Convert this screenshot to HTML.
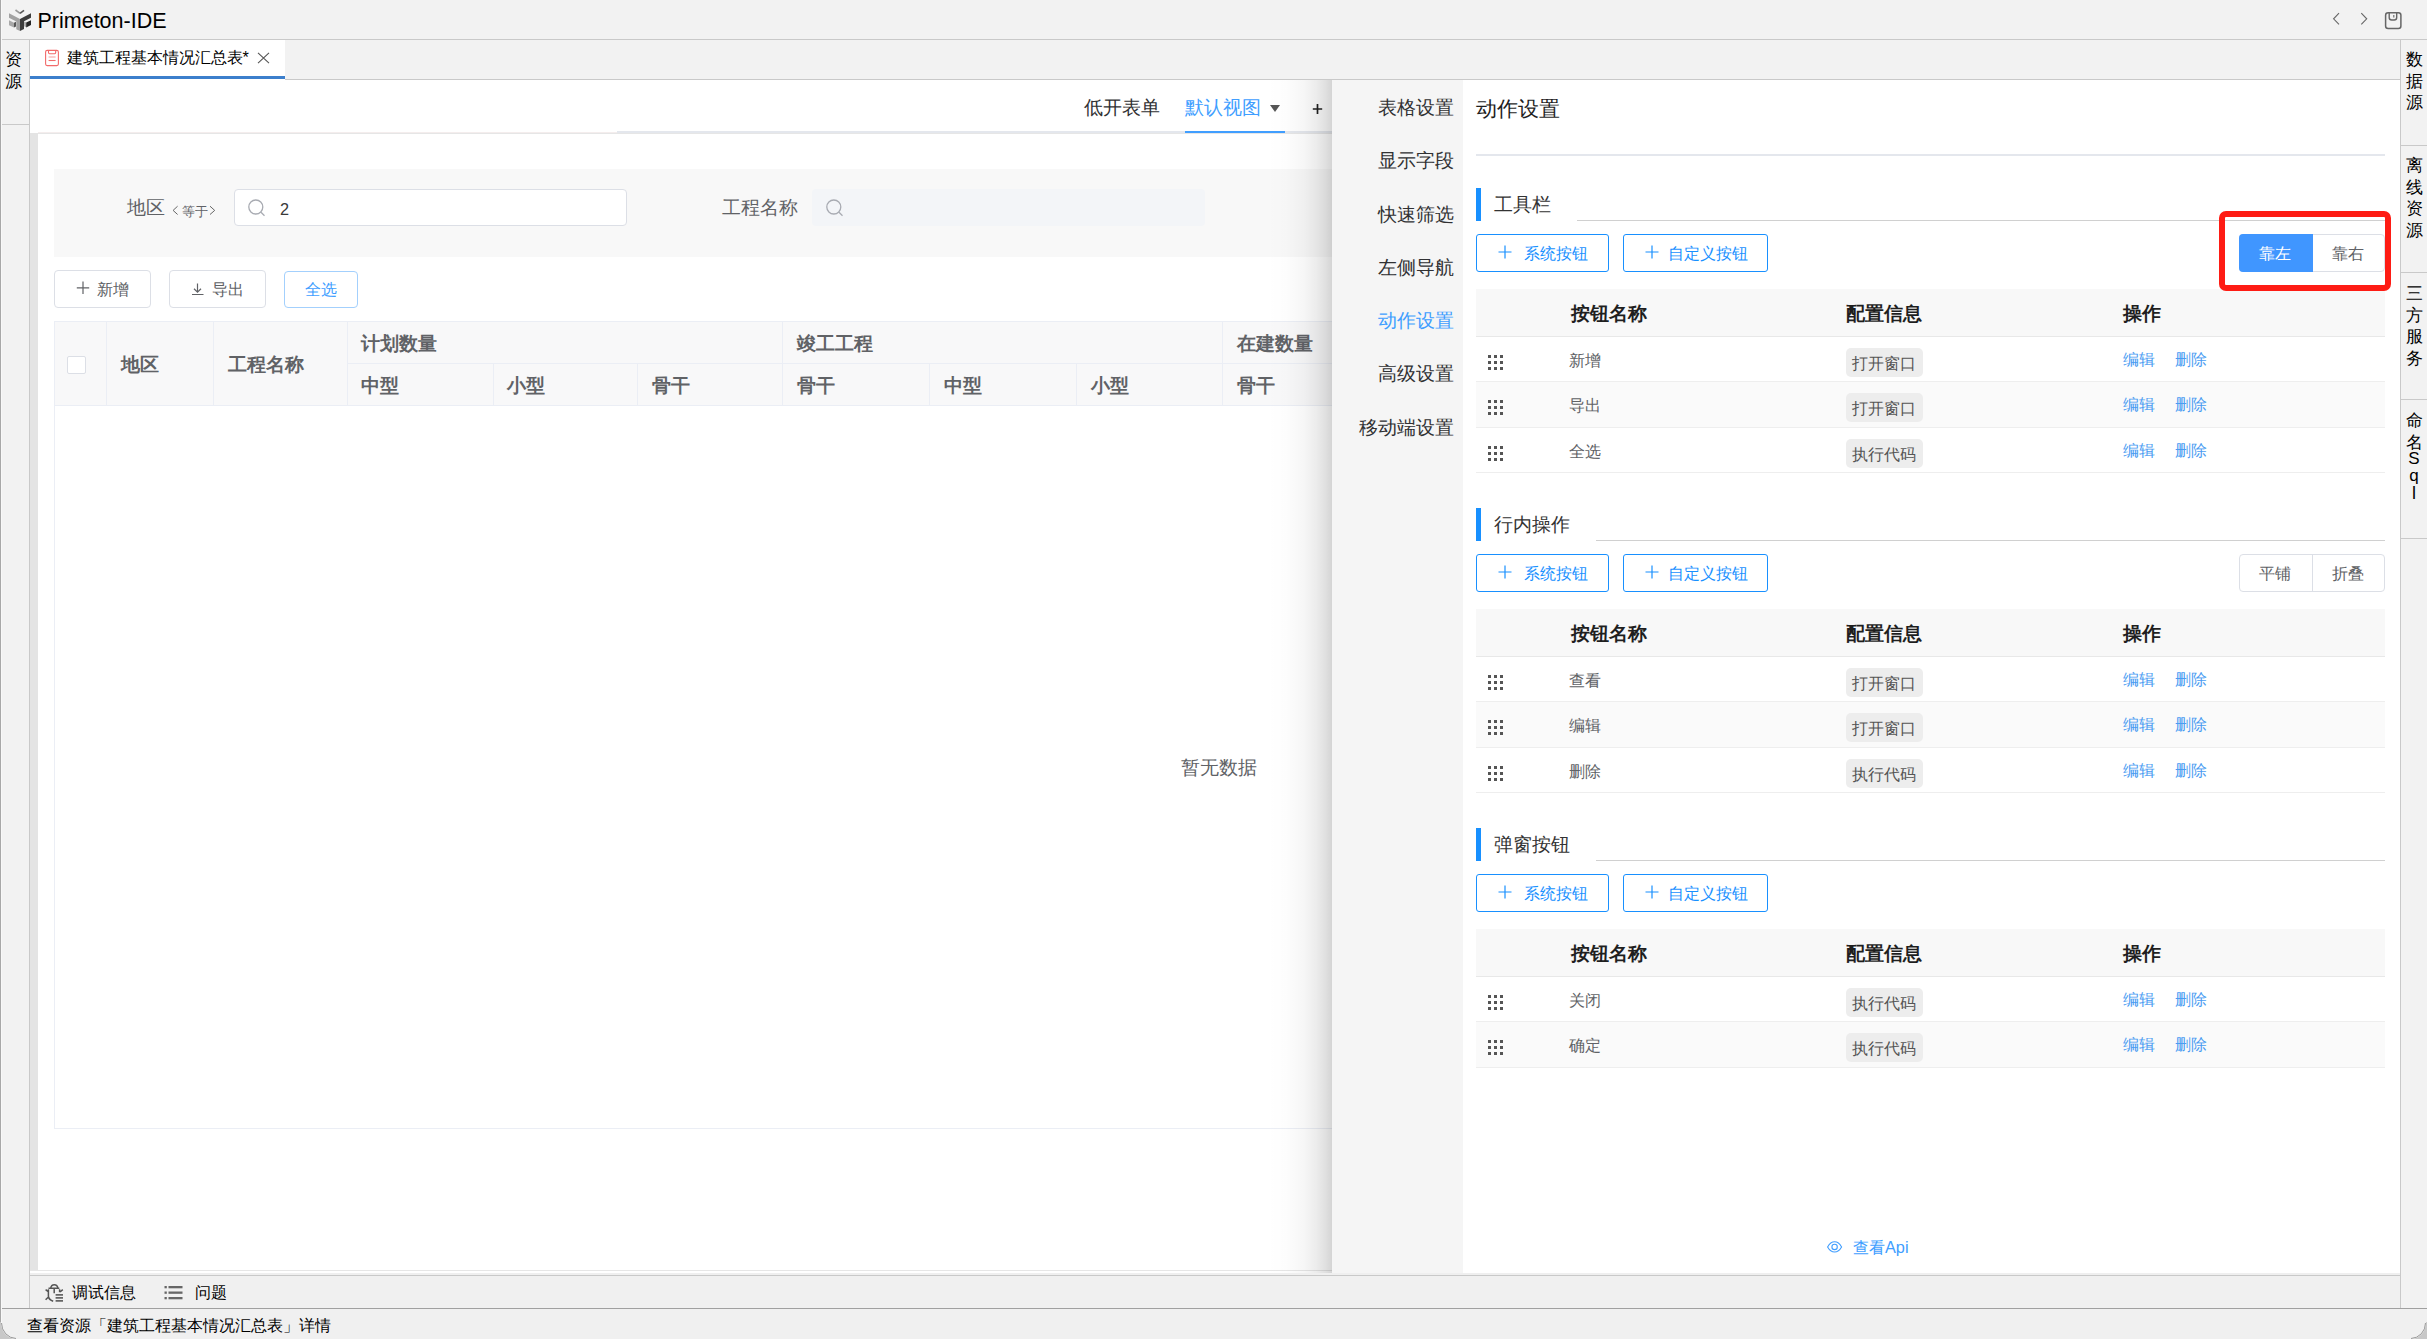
<!DOCTYPE html>
<html><head><meta charset="utf-8">
<style>
*{box-sizing:border-box;margin:0;padding:0}
html,body{width:2427px;height:1339px;overflow:hidden;background:#f0f0f0;font-family:"Liberation Sans",sans-serif;color:#333}
.a{position:absolute}
.t{position:absolute;white-space:nowrap;line-height:1}
</style></head><body>
<!-- window left border -->
<div class="a" style="left:0;top:0;width:1px;height:1339px;background:#a8a8a8"></div>
<div class="a" style="left:1px;top:0;width:1px;height:1339px;background:#f8f8f8;z-index:1"></div>
<!-- title bar -->
<div class="a" style="left:1px;top:0;width:2426px;height:39px;background:#f2f2f2"></div>
<div class="a" style="left:1px;top:39px;width:2426px;height:1px;background:#c9c9c9"></div>
<div class="t" style="left:37.5px;top:11px;font-size:21.5px;color:#000">Primeton-IDE</div>

<!-- left strip -->
<div class="a" style="left:1px;top:40px;width:28px;height:1268px;background:#f2f2f2"></div>
<div class="a" style="left:29px;top:40px;width:1px;height:1268px;background:#c9c9c9"></div>
<div class="a" style="left:1px;top:124px;width:28px;height:1px;background:#c9c9c9"></div>
<div class="t" style="left:5px;top:49px;font-size:17px;line-height:21.5px;color:#000;width:18px;white-space:normal">资源</div>

<!-- tab bar -->
<div class="a" style="left:30px;top:40px;width:2370px;height:39px;background:#f2f2f2"></div>
<div class="a" style="left:30px;top:79px;width:2370px;height:1px;background:#c9c9c9"></div>
<div class="a" style="left:30px;top:40px;width:255px;height:40px;background:#fff"></div>
<div class="a" style="left:30px;top:76px;width:255px;height:3px;background:#3c7fcc"></div>
<div class="t" style="left:66.5px;top:48.6px;font-size:16.3px;color:#000">建筑工程基本情况汇总表*</div>

<!-- content area -->
<div class="a" style="left:30px;top:80px;width:2370px;height:1194px;background:#fff"></div>


<!-- view tabs -->
<div class="t" style="left:1084px;top:98px;font-size:19px;color:#303133">低开表单</div>
<div class="t" style="left:1185px;top:98px;font-size:19px;color:#409eff">默认视图</div>
<div class="a" style="left:1270px;top:105px;width:0;height:0;border-left:5.5px solid transparent;border-right:5.5px solid transparent;border-top:7px solid #555"></div>
<svg class="a" style="left:1312px;top:103px" width="12" height="12" viewBox="0 0 12 12"><path d="M5.5 1 V11 M0.8 6 H10.2" stroke="#222" stroke-width="1.7"/></svg>
<div class="a" style="left:38px;top:132px;width:579px;height:1px;background:#f4eded"></div>
<div class="a" style="left:617px;top:131px;width:1783px;height:2px;background:#e4e7ed"></div>
<div class="a" style="left:1185px;top:131px;width:100px;height:2px;background:#409eff"></div>
<div class="a" style="left:30px;top:133px;width:2370px;height:1px;background:#e6e6e6"></div>
<div class="a" style="left:30px;top:133px;width:8px;height:1138px;background:#e4e4e4"></div>

<!-- query area -->
<div class="a" style="left:54px;top:169px;width:2322px;height:88px;background:#f8f8f8"></div>
<div class="t" style="left:127px;top:198px;font-size:19px;color:#606266">地区</div>
<svg class="a" style="left:170px;top:204px" width="48" height="13" viewBox="0 0 48 13"><path d="M7.6 2.2 L3.1 6.4 L7.6 10.5 M40 2.2 L44.7 6.4 L40 10.5" fill="none" stroke="#666" stroke-width="1"/></svg>
<div class="t" style="left:181.5px;top:205.5px;font-size:12.5px;color:#606266">等于</div>
<div class="a" style="left:234px;top:189px;width:393px;height:37px;background:#fff;border:1px solid #dcdfe6;border-radius:4px"></div>
<svg class="a" style="left:246px;top:197px" width="22" height="22" viewBox="0 0 22 22"><circle cx="9.8" cy="10" r="7" fill="none" stroke="#a8abb2" stroke-width="1.3"/><path d="M15 15.2 L18.5 18.7" stroke="#a8abb2" stroke-width="1.3"/></svg>
<div class="t" style="left:280px;top:201px;font-size:16.3px;color:#3a3a3a">2</div>
<div class="t" style="left:722px;top:198px;font-size:19px;color:#606266">工程名称</div>
<div class="a" style="left:812px;top:189px;width:393px;height:37px;background:#f3f5f8;border-radius:4px"></div>
<svg class="a" style="left:824px;top:197px" width="22" height="22" viewBox="0 0 22 22"><circle cx="9.8" cy="10" r="7" fill="none" stroke="#a8abb2" stroke-width="1.3"/><path d="M15 15.2 L18.5 18.7" stroke="#a8abb2" stroke-width="1.3"/></svg>

<!-- toolbar buttons -->
<div class="a" style="left:54px;top:270px;width:97px;height:38px;border:1px solid #dcdfe6;border-radius:4px;background:#fff"></div>
<svg class="a" style="left:76px;top:281px" width="14" height="14" viewBox="0 0 14 14"><path d="M7 0.5 V13 M0.8 6.8 H13.2" stroke="#606266" stroke-width="1.2"/></svg>
<div class="t" style="left:97px;top:281px;font-size:16.3px;color:#606266">新增</div>
<div class="a" style="left:169px;top:270px;width:97px;height:38px;border:1px solid #dcdfe6;border-radius:4px;background:#fff"></div>
<svg class="a" style="left:190px;top:282px" width="16" height="14" viewBox="0 0 16 14"><path d="M7.5 1.5 V10 M4 6.8 L7.5 10.2 L11 6.8 M2 12.5 H13.5" fill="none" stroke="#606266" stroke-width="1.2"/></svg>
<div class="t" style="left:212px;top:281px;font-size:16.3px;color:#606266">导出</div>
<div class="a" style="left:284px;top:271px;width:74px;height:37px;border:1px solid #a3d0fd;border-radius:4px;background:#fff"></div>
<div class="t" style="left:305px;top:281px;font-size:16.3px;color:#409eff">全选</div>

<!-- left table -->
<div class="a" style="left:54px;top:321px;width:2322px;height:808px;border:1px solid #ebeef5;border-right:none;background:#fff"></div>
<div class="a" style="left:55px;top:322px;width:2321px;height:83px;background:#f8f8f9"></div>
<div class="a" style="left:55px;top:405px;width:2321px;height:1px;background:#ebeef5"></div>
<div class="a" style="left:347px;top:363px;width:2029px;height:1px;background:#ebeef5"></div>
<div class="a" style="left:106px;top:322px;width:1px;height:83px;background:#ebeef5"></div>
<div class="a" style="left:213px;top:322px;width:1px;height:83px;background:#ebeef5"></div>
<div class="a" style="left:347px;top:322px;width:1px;height:83px;background:#ebeef5"></div>
<div class="a" style="left:493px;top:364px;width:1px;height:41px;background:#ebeef5"></div>
<div class="a" style="left:637px;top:364px;width:1px;height:41px;background:#ebeef5"></div>
<div class="a" style="left:782px;top:322px;width:1px;height:83px;background:#ebeef5"></div>
<div class="a" style="left:929px;top:364px;width:1px;height:41px;background:#ebeef5"></div>
<div class="a" style="left:1076px;top:364px;width:1px;height:41px;background:#ebeef5"></div>
<div class="a" style="left:1222px;top:322px;width:1px;height:83px;background:#ebeef5"></div>
<div class="a" style="left:67px;top:356px;width:19px;height:18px;border:1px solid #dcdfe6;border-radius:2px;background:#fff"></div>
<div class="t" style="left:121px;top:356px;font-size:18.5px;font-weight:bold;color:#606266">地区</div>
<div class="t" style="left:228px;top:356px;font-size:18.5px;font-weight:bold;color:#606266">工程名称</div>
<div class="t" style="left:361px;top:335px;font-size:18.5px;font-weight:bold;color:#606266">计划数量</div>
<div class="t" style="left:797px;top:335px;font-size:18.5px;font-weight:bold;color:#606266">竣工工程</div>
<div class="t" style="left:1237px;top:335px;font-size:18.5px;font-weight:bold;color:#606266">在建数量</div>
<div class="t" style="left:361px;top:377px;font-size:18.5px;font-weight:bold;color:#606266">中型</div>
<div class="t" style="left:507px;top:377px;font-size:18.5px;font-weight:bold;color:#606266">小型</div>
<div class="t" style="left:652px;top:377px;font-size:18.5px;font-weight:bold;color:#606266">骨干</div>
<div class="t" style="left:797px;top:377px;font-size:18.5px;font-weight:bold;color:#606266">骨干</div>
<div class="t" style="left:944px;top:377px;font-size:18.5px;font-weight:bold;color:#606266">中型</div>
<div class="t" style="left:1091px;top:377px;font-size:18.5px;font-weight:bold;color:#606266">小型</div>
<div class="t" style="left:1237px;top:377px;font-size:18.5px;font-weight:bold;color:#606266">骨干</div>
<div class="t" style="left:1181px;top:758px;font-size:19px;color:#606266">暂无数据</div>
<div class="a" style="left:30px;top:1270px;width:2370px;height:1px;background:#e6e6e6"></div><div class="a" style="left:30px;top:1273px;width:2370px;height:2px;background:#efefef"></div>


<!-- drawer -->
<div class="a" style="left:1332px;top:80px;width:1068px;height:1193px;background:#fff"></div>
<div class="a" style="left:1266px;top:80px;width:66px;height:1193px;background:linear-gradient(to right,rgba(0,0,0,0) 0%,rgba(0,0,0,0.008) 30%,rgba(0,0,0,0.035) 58%,rgba(0,0,0,0.075) 76%,rgba(0,0,0,0.12) 90%,rgba(0,0,0,0.17) 100%)"></div>
<div class="a" style="left:1332px;top:80px;width:131px;height:1193px;background:#f5f5f5"></div>
<div class="t" style="left:1378px;top:98px;font-size:19px;color:#303133">表格设置</div>
<div class="t" style="left:1378px;top:151px;font-size:19px;color:#303133">显示字段</div>
<div class="t" style="left:1378px;top:205px;font-size:19px;color:#303133">快速筛选</div>
<div class="t" style="left:1378px;top:258px;font-size:19px;color:#303133">左侧导航</div>
<div class="t" style="left:1378px;top:311px;font-size:19px;color:#409eff">动作设置</div>
<div class="t" style="left:1378px;top:364px;font-size:19px;color:#303133">高级设置</div>
<div class="t" style="left:1359px;top:418px;font-size:19px;color:#303133">移动端设置</div>
<div class="t" style="left:1476px;top:98px;font-size:21px;color:#1f1f1f">动作设置</div>
<div class="a" style="left:1476px;top:154px;width:909px;height:2px;background:#e4e7ed"></div>
<div class="a" style="left:1476px;top:188px;width:5px;height:33px;background:#1890ff"></div>
<div class="t" style="left:1494px;top:195px;font-size:19px;color:#333">工具栏</div>
<div class="a" style="left:1577px;top:220px;width:808px;height:1px;background:#d0d0d0"></div>
<div class="a" style="left:1476px;top:234px;width:133px;height:38px;border:1px solid #1890ff;border-radius:3px"></div>
<svg class="a" style="left:1498px;top:245px" width="14" height="14" viewBox="0 0 14 14"><path d="M7 0.5 V13.5 M0.5 7 H13.5" stroke="#1890ff" stroke-width="1.2"/></svg>
<div class="t" style="left:1524px;top:245px;font-size:16.3px;color:#1890ff">系统按钮</div>
<div class="a" style="left:1623px;top:234px;width:145px;height:38px;border:1px solid #1890ff;border-radius:3px"></div>
<svg class="a" style="left:1645px;top:245px" width="14" height="14" viewBox="0 0 14 14"><path d="M7 0.5 V13.5 M0.5 7 H13.5" stroke="#1890ff" stroke-width="1.2"/></svg>
<div class="t" style="left:1668px;top:245px;font-size:16.3px;color:#1890ff">自定义按钮</div>
<div class="a" style="left:2239px;top:234px;width:146px;height:38px;border:1px solid #dcdfe6;border-radius:4px;background:#fff"></div>
<div class="a" style="left:2239px;top:234px;width:74px;height:38px;background:#4096ff;border-radius:4px 0 0 4px"></div>
<div class="t" style="left:2259px;top:244.5px;font-size:16.3px;color:#fff">靠左</div>
<div class="t" style="left:2332px;top:244.5px;font-size:16.3px;color:#606266">靠右</div>
<div class="a" style="left:1476px;top:289px;width:909px;height:48px;background:#f8f8f8;border-bottom:1px solid #e8e8e8"></div>
<div class="t" style="left:1570.5px;top:305px;font-size:18.5px;font-weight:bold;color:#1f1f1f">按钮名称</div>
<div class="t" style="left:1846px;top:305px;font-size:18.5px;font-weight:bold;color:#1f1f1f">配置信息</div>
<div class="t" style="left:2122.5px;top:305px;font-size:18.5px;font-weight:bold;color:#1f1f1f">操作</div>
<div class="a" style="left:1476px;top:337px;width:909px;height:45px;background:#fff;border-bottom:1px solid #eee"></div>
<div class="a" style="left:1488px;top:355px;width:3px;height:3px;background:#555"></div><div class="a" style="left:1488px;top:361px;width:3px;height:3px;background:#555"></div><div class="a" style="left:1488px;top:367px;width:3px;height:3px;background:#555"></div><div class="a" style="left:1494px;top:355px;width:3px;height:3px;background:#555"></div><div class="a" style="left:1494px;top:361px;width:3px;height:3px;background:#555"></div><div class="a" style="left:1494px;top:367px;width:3px;height:3px;background:#555"></div><div class="a" style="left:1500px;top:355px;width:3px;height:3px;background:#555"></div><div class="a" style="left:1500px;top:361px;width:3px;height:3px;background:#555"></div><div class="a" style="left:1500px;top:367px;width:3px;height:3px;background:#555"></div>
<div class="t" style="left:1569px;top:352px;font-size:16.3px;color:#606266">新增</div>
<div class="a" style="left:1846px;top:348px;width:77px;height:29px;background:#ededed;border-radius:5px"></div>
<div class="t" style="left:1852px;top:355px;font-size:16.3px;color:#555">打开窗口</div>
<div class="t" style="left:2123px;top:351px;font-size:16.3px;color:#4a9cf2">编辑</div>
<div class="t" style="left:2175px;top:351px;font-size:16.3px;color:#4a9cf2">删除</div>
<div class="a" style="left:1476px;top:382px;width:909px;height:46px;background:#fafafa;border-bottom:1px solid #eee"></div>
<div class="a" style="left:1488px;top:400px;width:3px;height:3px;background:#555"></div><div class="a" style="left:1488px;top:406px;width:3px;height:3px;background:#555"></div><div class="a" style="left:1488px;top:412px;width:3px;height:3px;background:#555"></div><div class="a" style="left:1494px;top:400px;width:3px;height:3px;background:#555"></div><div class="a" style="left:1494px;top:406px;width:3px;height:3px;background:#555"></div><div class="a" style="left:1494px;top:412px;width:3px;height:3px;background:#555"></div><div class="a" style="left:1500px;top:400px;width:3px;height:3px;background:#555"></div><div class="a" style="left:1500px;top:406px;width:3px;height:3px;background:#555"></div><div class="a" style="left:1500px;top:412px;width:3px;height:3px;background:#555"></div>
<div class="t" style="left:1569px;top:397px;font-size:16.3px;color:#606266">导出</div>
<div class="a" style="left:1846px;top:393px;width:77px;height:29px;background:#ededed;border-radius:5px"></div>
<div class="t" style="left:1852px;top:400px;font-size:16.3px;color:#555">打开窗口</div>
<div class="t" style="left:2123px;top:396px;font-size:16.3px;color:#4a9cf2">编辑</div>
<div class="t" style="left:2175px;top:396px;font-size:16.3px;color:#4a9cf2">删除</div>
<div class="a" style="left:1476px;top:428px;width:909px;height:45px;background:#fff;border-bottom:1px solid #eee"></div>
<div class="a" style="left:1488px;top:446px;width:3px;height:3px;background:#555"></div><div class="a" style="left:1488px;top:452px;width:3px;height:3px;background:#555"></div><div class="a" style="left:1488px;top:458px;width:3px;height:3px;background:#555"></div><div class="a" style="left:1494px;top:446px;width:3px;height:3px;background:#555"></div><div class="a" style="left:1494px;top:452px;width:3px;height:3px;background:#555"></div><div class="a" style="left:1494px;top:458px;width:3px;height:3px;background:#555"></div><div class="a" style="left:1500px;top:446px;width:3px;height:3px;background:#555"></div><div class="a" style="left:1500px;top:452px;width:3px;height:3px;background:#555"></div><div class="a" style="left:1500px;top:458px;width:3px;height:3px;background:#555"></div>
<div class="t" style="left:1569px;top:443px;font-size:16.3px;color:#606266">全选</div>
<div class="a" style="left:1846px;top:439px;width:77px;height:29px;background:#ededed;border-radius:5px"></div>
<div class="t" style="left:1852px;top:446px;font-size:16.3px;color:#555">执行代码</div>
<div class="t" style="left:2123px;top:442px;font-size:16.3px;color:#4a9cf2">编辑</div>
<div class="t" style="left:2175px;top:442px;font-size:16.3px;color:#4a9cf2">删除</div>
<div class="a" style="left:1476px;top:508px;width:5px;height:33px;background:#1890ff"></div>
<div class="t" style="left:1494px;top:515px;font-size:19px;color:#333">行内操作</div>
<div class="a" style="left:1596px;top:540px;width:789px;height:1px;background:#d0d0d0"></div>
<div class="a" style="left:1476px;top:554px;width:133px;height:38px;border:1px solid #1890ff;border-radius:3px"></div>
<svg class="a" style="left:1498px;top:565px" width="14" height="14" viewBox="0 0 14 14"><path d="M7 0.5 V13.5 M0.5 7 H13.5" stroke="#1890ff" stroke-width="1.2"/></svg>
<div class="t" style="left:1524px;top:565px;font-size:16.3px;color:#1890ff">系统按钮</div>
<div class="a" style="left:1623px;top:554px;width:145px;height:38px;border:1px solid #1890ff;border-radius:3px"></div>
<svg class="a" style="left:1645px;top:565px" width="14" height="14" viewBox="0 0 14 14"><path d="M7 0.5 V13.5 M0.5 7 H13.5" stroke="#1890ff" stroke-width="1.2"/></svg>
<div class="t" style="left:1668px;top:565px;font-size:16.3px;color:#1890ff">自定义按钮</div>
<div class="a" style="left:2239px;top:554px;width:146px;height:38px;border:1px solid #dcdfe6;border-radius:4px;background:#fff"></div>
<div class="a" style="left:2312px;top:554px;width:1px;height:38px;background:#dcdfe6"></div>
<div class="t" style="left:2259px;top:564.5px;font-size:16.3px;color:#606266">平铺</div>
<div class="t" style="left:2332px;top:564.5px;font-size:16.3px;color:#606266">折叠</div>
<div class="a" style="left:1476px;top:609px;width:909px;height:48px;background:#f8f8f8;border-bottom:1px solid #e8e8e8"></div>
<div class="t" style="left:1570.5px;top:625px;font-size:18.5px;font-weight:bold;color:#1f1f1f">按钮名称</div>
<div class="t" style="left:1846px;top:625px;font-size:18.5px;font-weight:bold;color:#1f1f1f">配置信息</div>
<div class="t" style="left:2122.5px;top:625px;font-size:18.5px;font-weight:bold;color:#1f1f1f">操作</div>
<div class="a" style="left:1476px;top:657px;width:909px;height:45px;background:#fff;border-bottom:1px solid #eee"></div>
<div class="a" style="left:1488px;top:675px;width:3px;height:3px;background:#555"></div><div class="a" style="left:1488px;top:681px;width:3px;height:3px;background:#555"></div><div class="a" style="left:1488px;top:687px;width:3px;height:3px;background:#555"></div><div class="a" style="left:1494px;top:675px;width:3px;height:3px;background:#555"></div><div class="a" style="left:1494px;top:681px;width:3px;height:3px;background:#555"></div><div class="a" style="left:1494px;top:687px;width:3px;height:3px;background:#555"></div><div class="a" style="left:1500px;top:675px;width:3px;height:3px;background:#555"></div><div class="a" style="left:1500px;top:681px;width:3px;height:3px;background:#555"></div><div class="a" style="left:1500px;top:687px;width:3px;height:3px;background:#555"></div>
<div class="t" style="left:1569px;top:672px;font-size:16.3px;color:#606266">查看</div>
<div class="a" style="left:1846px;top:668px;width:77px;height:29px;background:#ededed;border-radius:5px"></div>
<div class="t" style="left:1852px;top:675px;font-size:16.3px;color:#555">打开窗口</div>
<div class="t" style="left:2123px;top:671px;font-size:16.3px;color:#4a9cf2">编辑</div>
<div class="t" style="left:2175px;top:671px;font-size:16.3px;color:#4a9cf2">删除</div>
<div class="a" style="left:1476px;top:702px;width:909px;height:46px;background:#fafafa;border-bottom:1px solid #eee"></div>
<div class="a" style="left:1488px;top:720px;width:3px;height:3px;background:#555"></div><div class="a" style="left:1488px;top:726px;width:3px;height:3px;background:#555"></div><div class="a" style="left:1488px;top:732px;width:3px;height:3px;background:#555"></div><div class="a" style="left:1494px;top:720px;width:3px;height:3px;background:#555"></div><div class="a" style="left:1494px;top:726px;width:3px;height:3px;background:#555"></div><div class="a" style="left:1494px;top:732px;width:3px;height:3px;background:#555"></div><div class="a" style="left:1500px;top:720px;width:3px;height:3px;background:#555"></div><div class="a" style="left:1500px;top:726px;width:3px;height:3px;background:#555"></div><div class="a" style="left:1500px;top:732px;width:3px;height:3px;background:#555"></div>
<div class="t" style="left:1569px;top:717px;font-size:16.3px;color:#606266">编辑</div>
<div class="a" style="left:1846px;top:713px;width:77px;height:29px;background:#ededed;border-radius:5px"></div>
<div class="t" style="left:1852px;top:720px;font-size:16.3px;color:#555">打开窗口</div>
<div class="t" style="left:2123px;top:716px;font-size:16.3px;color:#4a9cf2">编辑</div>
<div class="t" style="left:2175px;top:716px;font-size:16.3px;color:#4a9cf2">删除</div>
<div class="a" style="left:1476px;top:748px;width:909px;height:45px;background:#fff;border-bottom:1px solid #eee"></div>
<div class="a" style="left:1488px;top:766px;width:3px;height:3px;background:#555"></div><div class="a" style="left:1488px;top:772px;width:3px;height:3px;background:#555"></div><div class="a" style="left:1488px;top:778px;width:3px;height:3px;background:#555"></div><div class="a" style="left:1494px;top:766px;width:3px;height:3px;background:#555"></div><div class="a" style="left:1494px;top:772px;width:3px;height:3px;background:#555"></div><div class="a" style="left:1494px;top:778px;width:3px;height:3px;background:#555"></div><div class="a" style="left:1500px;top:766px;width:3px;height:3px;background:#555"></div><div class="a" style="left:1500px;top:772px;width:3px;height:3px;background:#555"></div><div class="a" style="left:1500px;top:778px;width:3px;height:3px;background:#555"></div>
<div class="t" style="left:1569px;top:763px;font-size:16.3px;color:#606266">删除</div>
<div class="a" style="left:1846px;top:759px;width:77px;height:29px;background:#ededed;border-radius:5px"></div>
<div class="t" style="left:1852px;top:766px;font-size:16.3px;color:#555">执行代码</div>
<div class="t" style="left:2123px;top:762px;font-size:16.3px;color:#4a9cf2">编辑</div>
<div class="t" style="left:2175px;top:762px;font-size:16.3px;color:#4a9cf2">删除</div>
<div class="a" style="left:1476px;top:828px;width:5px;height:33px;background:#1890ff"></div>
<div class="t" style="left:1494px;top:835px;font-size:19px;color:#333">弹窗按钮</div>
<div class="a" style="left:1596px;top:860px;width:789px;height:1px;background:#d0d0d0"></div>
<div class="a" style="left:1476px;top:874px;width:133px;height:38px;border:1px solid #1890ff;border-radius:3px"></div>
<svg class="a" style="left:1498px;top:885px" width="14" height="14" viewBox="0 0 14 14"><path d="M7 0.5 V13.5 M0.5 7 H13.5" stroke="#1890ff" stroke-width="1.2"/></svg>
<div class="t" style="left:1524px;top:885px;font-size:16.3px;color:#1890ff">系统按钮</div>
<div class="a" style="left:1623px;top:874px;width:145px;height:38px;border:1px solid #1890ff;border-radius:3px"></div>
<svg class="a" style="left:1645px;top:885px" width="14" height="14" viewBox="0 0 14 14"><path d="M7 0.5 V13.5 M0.5 7 H13.5" stroke="#1890ff" stroke-width="1.2"/></svg>
<div class="t" style="left:1668px;top:885px;font-size:16.3px;color:#1890ff">自定义按钮</div>
<div class="a" style="left:1476px;top:929px;width:909px;height:48px;background:#f8f8f8;border-bottom:1px solid #e8e8e8"></div>
<div class="t" style="left:1570.5px;top:945px;font-size:18.5px;font-weight:bold;color:#1f1f1f">按钮名称</div>
<div class="t" style="left:1846px;top:945px;font-size:18.5px;font-weight:bold;color:#1f1f1f">配置信息</div>
<div class="t" style="left:2122.5px;top:945px;font-size:18.5px;font-weight:bold;color:#1f1f1f">操作</div>
<div class="a" style="left:1476px;top:977px;width:909px;height:45px;background:#fff;border-bottom:1px solid #eee"></div>
<div class="a" style="left:1488px;top:995px;width:3px;height:3px;background:#555"></div><div class="a" style="left:1488px;top:1001px;width:3px;height:3px;background:#555"></div><div class="a" style="left:1488px;top:1007px;width:3px;height:3px;background:#555"></div><div class="a" style="left:1494px;top:995px;width:3px;height:3px;background:#555"></div><div class="a" style="left:1494px;top:1001px;width:3px;height:3px;background:#555"></div><div class="a" style="left:1494px;top:1007px;width:3px;height:3px;background:#555"></div><div class="a" style="left:1500px;top:995px;width:3px;height:3px;background:#555"></div><div class="a" style="left:1500px;top:1001px;width:3px;height:3px;background:#555"></div><div class="a" style="left:1500px;top:1007px;width:3px;height:3px;background:#555"></div>
<div class="t" style="left:1569px;top:992px;font-size:16.3px;color:#606266">关闭</div>
<div class="a" style="left:1846px;top:988px;width:77px;height:29px;background:#ededed;border-radius:5px"></div>
<div class="t" style="left:1852px;top:995px;font-size:16.3px;color:#555">执行代码</div>
<div class="t" style="left:2123px;top:991px;font-size:16.3px;color:#4a9cf2">编辑</div>
<div class="t" style="left:2175px;top:991px;font-size:16.3px;color:#4a9cf2">删除</div>
<div class="a" style="left:1476px;top:1022px;width:909px;height:46px;background:#fafafa;border-bottom:1px solid #eee"></div>
<div class="a" style="left:1488px;top:1040px;width:3px;height:3px;background:#555"></div><div class="a" style="left:1488px;top:1046px;width:3px;height:3px;background:#555"></div><div class="a" style="left:1488px;top:1052px;width:3px;height:3px;background:#555"></div><div class="a" style="left:1494px;top:1040px;width:3px;height:3px;background:#555"></div><div class="a" style="left:1494px;top:1046px;width:3px;height:3px;background:#555"></div><div class="a" style="left:1494px;top:1052px;width:3px;height:3px;background:#555"></div><div class="a" style="left:1500px;top:1040px;width:3px;height:3px;background:#555"></div><div class="a" style="left:1500px;top:1046px;width:3px;height:3px;background:#555"></div><div class="a" style="left:1500px;top:1052px;width:3px;height:3px;background:#555"></div>
<div class="t" style="left:1569px;top:1037px;font-size:16.3px;color:#606266">确定</div>
<div class="a" style="left:1846px;top:1033px;width:77px;height:29px;background:#ededed;border-radius:5px"></div>
<div class="t" style="left:1852px;top:1040px;font-size:16.3px;color:#555">执行代码</div>
<div class="t" style="left:2123px;top:1036px;font-size:16.3px;color:#4a9cf2">编辑</div>
<div class="t" style="left:2175px;top:1036px;font-size:16.3px;color:#4a9cf2">删除</div>
<div class="a" style="left:2219px;top:211px;width:172px;height:80px;border:6px solid #fe1c14;border-radius:7px"></div>
<svg class="a" style="left:1826px;top:1240px" width="18" height="14" viewBox="0 0 18 14"><path d="M1.6 6.9 Q4.5 1.8 8.6 1.8 Q12.7 1.8 15.6 6.9 Q12.7 12 8.6 12 Q4.5 12 1.6 6.9 Z" fill="none" stroke="#409eff" stroke-width="1.1"/><circle cx="8.6" cy="6.9" r="2.7" fill="none" stroke="#409eff" stroke-width="1.1"/></svg>
<div class="t" style="left:1853px;top:1239px;font-size:16.3px;color:#409eff">查看Api</div>

<!-- right strip -->
<div class="a" style="left:2400px;top:40px;width:1px;height:1268px;background:#c9c9c9"></div>
<div class="a" style="left:2401px;top:40px;width:26px;height:1268px;background:#f2f2f2"></div>

<!-- bottom panel -->
<div class="a" style="left:30px;top:1275px;width:2370px;height:1px;background:#c9c9c9"></div>
<div class="a" style="left:1px;top:1308px;width:2426px;height:1px;background:#a0a0a0"></div>


<!-- logo -->
<svg class="a" style="left:5px;top:4px" width="32" height="32" viewBox="0 0 32 32">
<path d="M10.5 6 L15 9.3" stroke="#9a9a9a" stroke-width="1.6" fill="none"/>
<path d="M15 9.3 L19 6.3" stroke="#555" stroke-width="1.6" fill="none"/>
<polygon points="4,9.3 15,15 15,27 11.3,25.2 11.3,17.5 4,13.8" fill="#a2a2a2"/>
<polygon points="4,16.3 9,18.8 9,23.6 4,21.2" fill="#a8a8a8"/>
<polygon points="9,18.8 11,17.8 11,22.6 9,23.6" fill="#555"/>
<polygon points="15,15 26,9.3 26,13.8 19,17.3 19,25 15,27" fill="#3c3c3c"/>
<polygon points="19.2,17.6 21.2,18.6 21.2,23.2 19.2,22.2" fill="#a5a5a5"/>
<polygon points="21.2,18.6 26,16.2 26,21 21.2,23.4" fill="#262626"/>
</svg>
<!-- title right icons -->
<svg class="a" style="left:2325px;top:5px" width="85" height="30" viewBox="0 0 85 30">
<path d="M14 8.2 L8.6 13.8 L14 19.4" fill="none" stroke="#666" stroke-width="1.1"/>
<path d="M36.3 8.2 L41.7 13.8 L36.3 19.4" fill="none" stroke="#666" stroke-width="1.1"/>
<rect x="60.6" y="7.7" width="15.3" height="15.8" rx="2.5" fill="none" stroke="#666" stroke-width="1.5"/>
<path d="M64.2 7.5 V12.5 Q64.2 15 66.7 15 H69.2 Q71.7 15 71.7 12.5 V7.5" fill="none" stroke="#666" stroke-width="1.4"/>
<path d="M68.8 10 V12.6" stroke="#666" stroke-width="1.1"/>
</svg>
<!-- tab icon -->
<svg class="a" style="left:42px;top:47px" width="20" height="22" viewBox="0 0 20 22">
<rect x="3.6" y="3.4" width="12.8" height="15.2" rx="1.6" fill="none" stroke="#f26a6a" stroke-width="1.1"/>
<path d="M6.5 3.4 V5.6 Q6.5 6.7 7.6 6.7 H12.6 Q13.7 6.7 13.7 5.6 V3.4" fill="none" stroke="#f26a6a" stroke-width="1.1"/>
<path d="M6.6 10 H13.6" stroke="#f7a5a5" stroke-width="1.1"/>
<path d="M6.6 13.5 H13.6" stroke="#f26a6a" stroke-width="1.1"/>
</svg>
<svg class="a" style="left:256px;top:51px" width="15" height="14" viewBox="0 0 15 14">
<path d="M2 1.8 L13 12.2 M13 1.8 L2 12.2" stroke="#555" stroke-width="1.1"/>
</svg>
<!-- right strip texts -->
<div class="a" style="left:2401px;top:145px;width:26px;height:1px;background:#c9c9c9"></div>
<div class="a" style="left:2401px;top:272px;width:26px;height:1px;background:#c9c9c9"></div>
<div class="a" style="left:2401px;top:399px;width:26px;height:1px;background:#c9c9c9"></div>
<div class="a" style="left:2401px;top:538px;width:26px;height:1px;background:#c9c9c9"></div>
<div class="t" style="left:2405px;top:49px;font-size:17px;line-height:21.7px;color:#000;width:18px;white-space:normal;text-align:center">数据源</div>
<div class="t" style="left:2405px;top:155px;font-size:17px;line-height:21.7px;color:#000;width:18px;white-space:normal;text-align:center">离线资源</div>
<div class="t" style="left:2405px;top:283px;font-size:17px;line-height:21.7px;color:#000;width:18px;white-space:normal;text-align:center">三方服务</div>
<div class="t" style="left:2405px;top:410px;font-size:17px;line-height:21.7px;color:#000;width:18px;white-space:normal;text-align:center">命名</div>
<div class="t" style="left:2405px;top:450.4px;font-size:17px;color:#000;width:18px;text-align:center">S</div>
<div class="t" style="left:2405px;top:466.7px;font-size:17px;color:#000;width:18px;text-align:center">q</div>
<div class="t" style="left:2405px;top:484px;font-size:18px;color:#000;width:18px;text-align:center">l</div>
<!-- bottom panel -->
<svg class="a" style="left:40px;top:1280px" width="30" height="26" viewBox="0 0 30 26">
<path d="M8.5 8.3 H19.3 M10.6 8.3 Q11.2 4.7 14.3 4.7 Q17.4 4.7 18 8.3 M8.4 9.3 V16.5 Q9 19.8 13.2 21.2 M14.2 8.5 V13.3 M19.6 9.3 V12.3 M5.6 9.6 L8.2 11.6 M5.6 19.8 L8.2 17.2 M20 12 L22.8 9.6" fill="none" stroke="#555" stroke-width="1.5"/>
<path d="M15.6 14.8 H23 M15.6 17.8 H23 M15.6 20.8 H23" stroke="#666" stroke-width="1.8"/>
</svg>
<div class="t" style="left:72px;top:1283.5px;font-size:16.05px;color:#000">调试信息</div>
<svg class="a" style="left:164px;top:1285px" width="20" height="16" viewBox="0 0 20 16">
<rect x="0.5" y="1" width="2.3" height="2.3" fill="#666"/><rect x="0.5" y="6.5" width="2.3" height="2.3" fill="#666"/><rect x="0.5" y="12" width="2.3" height="2.3" fill="#666"/>
<rect x="4.5" y="1" width="14" height="2.3" fill="#666"/><rect x="4.5" y="6.5" width="14" height="2.3" fill="#666"/><rect x="4.5" y="12" width="14" height="2.3" fill="#666"/>
</svg>
<div class="t" style="left:195px;top:1283.5px;font-size:16.05px;color:#000">问题</div>
<!-- corners -->
<svg class="a" style="left:0;top:1322px;z-index:2" width="16" height="17" viewBox="0 0 16 17"><path d="M0 0 L0 17 L16 17 A15 16 0 0 1 1 1 L1 0 Z" fill="#c8c8c8"/><path d="M16 16.5 A15 15.5 0 0 1 1.5 1" fill="none" stroke="#9a9a9a" stroke-width="1"/></svg>
<svg class="a" style="left:2411px;top:1322px;z-index:2" width="16" height="17" viewBox="0 0 16 17"><path d="M16 0 L16 17 L0 17 A15 16 0 0 0 15 1 L15 0 Z" fill="#c8c8c8"/><path d="M0 16.5 A15 15.5 0 0 0 14.5 1" fill="none" stroke="#9a9a9a" stroke-width="1"/></svg>
<!-- status -->
<div class="t" style="left:27px;top:1316.5px;font-size:16.05px;color:#000">查看资源「建筑工程基本情况汇总表」详情</div>

</body></html>
